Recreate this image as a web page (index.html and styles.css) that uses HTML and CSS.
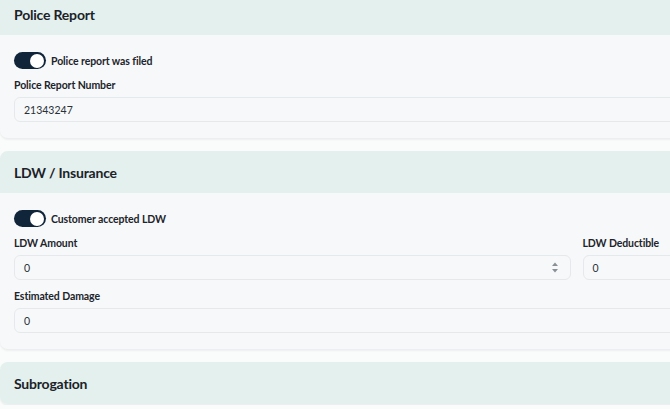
FILE: index.html
```html
<!DOCTYPE html>
<html lang="en">
<head>
    <meta charset="UTF-8">
    <title>Incident Details</title>
    <link rel="stylesheet" href="styles.css">
</head>
<body>
    <div class="sections">
        <section class="card">
            <div class="card-header">Police Report</div>
            <div class="card-body">
                <label class="switch-row">
                    <span class="switch on"><span class="knob"></span></span>
                    <span class="switch-label">Police report was filed</span>
                </label>
                <div class="field">
                    <div class="field-label">Police Report Number</div>
                    <div class="input"><span>21343247</span></div>
                </div>
            </div>
        </section>

        <section class="card">
            <div class="card-header">LDW / Insurance</div>
            <div class="card-body">
                <label class="switch-row">
                    <span class="switch on"><span class="knob"></span></span>
                    <span class="switch-label">Customer accepted LDW</span>
                </label>
                <div class="field-grid">
                    <div class="field">
                        <div class="field-label">LDW Amount</div>
                        <div class="input">
                            <span>0</span>
                            <svg class="spinner" width="8" height="11" viewBox="0 0 8 11">
                                <path d="M4 0.5 L7 4 L1 4 Z" fill="#8a9097"/>
                                <path d="M1 7 L7 7 L4 10.5 Z" fill="#8a9097"/>
                            </svg>
                        </div>
                    </div>
                    <div class="field">
                        <div class="field-label">LDW Deductible</div>
                        <div class="input"><span>0</span></div>
                    </div>
                </div>
                <div class="field">
                    <div class="field-label">Estimated Damage</div>
                    <div class="input"><span>0</span></div>
                </div>
            </div>
        </section>

        <section class="card">
            <div class="card-header">Subrogation</div>
        </section>
    </div>
</body>
</html>
```

FILE: styles.css
```css
body {
    margin: 0;
    background-color: #fafbfb;
    font-family: Lato, "Noto Sans", sans-serif;
    color: #1d242b;
    overflow: hidden;
}

.sections {
    width: 1154px;
    margin-top: -7px;
    display: flex;
    flex-direction: column;
    gap: 12px;
}

.card {
    background-color: #f6f8f9;
    border: 1px solid #eceff1;
    border-left: none;
    border-top: none;
    border-radius: 8px;
    box-shadow: 0 1px 2px rgba(0, 0, 0, 0.05);
    overflow: hidden;
}

.card-header {
    height: 42px;
    padding: 0 14px;
    display: flex;
    align-items: center;
    background-color: #e4f0ed;
    font-size: 14px;
    font-weight: 700;
    letter-spacing: -0.2px;
    color: #1b2229;
}

.card-body {
    padding: 17px 14px 16px;
    display: flex;
    flex-direction: column;
    gap: 9px;
}

.switch-row {
    display: flex;
    align-items: center;
    gap: 5px;
}

.switch {
    width: 32px;
    height: 17px;
    border-radius: 9px;
    background-color: #10243a;
    display: flex;
    align-items: center;
    padding: 0 2px;
    box-sizing: border-box;
}

.switch.on {
    justify-content: flex-end;
}

.knob {
    width: 14px;
    height: 14px;
    border-radius: 50%;
    background-color: #fff;
}

.switch-label {
    font-size: 10.5px;
    font-weight: 700;
    letter-spacing: -0.1px;
    color: #1d242b;
}

.field {
    display: flex;
    flex-direction: column;
    gap: 5px;
}

.field-label {
    font-size: 10.5px;
    font-weight: 700;
    letter-spacing: -0.1px;
    line-height: 14px;
    color: #1d242b;
}

.field-grid {
    display: grid;
    grid-template-columns: 1fr 1fr;
    gap: 12px;
}

.input {
    height: 25px;
    box-sizing: border-box;
    padding: 0 9px;
    display: flex;
    align-items: center;
    justify-content: space-between;
    background-color: #f7f8f9;
    border: 1px solid #e6e9eb;
    border-radius: 6px;
    font-size: 10.5px;
    color: #2a3138;
}

.spinner {
    margin-right: 2px;
}
```
